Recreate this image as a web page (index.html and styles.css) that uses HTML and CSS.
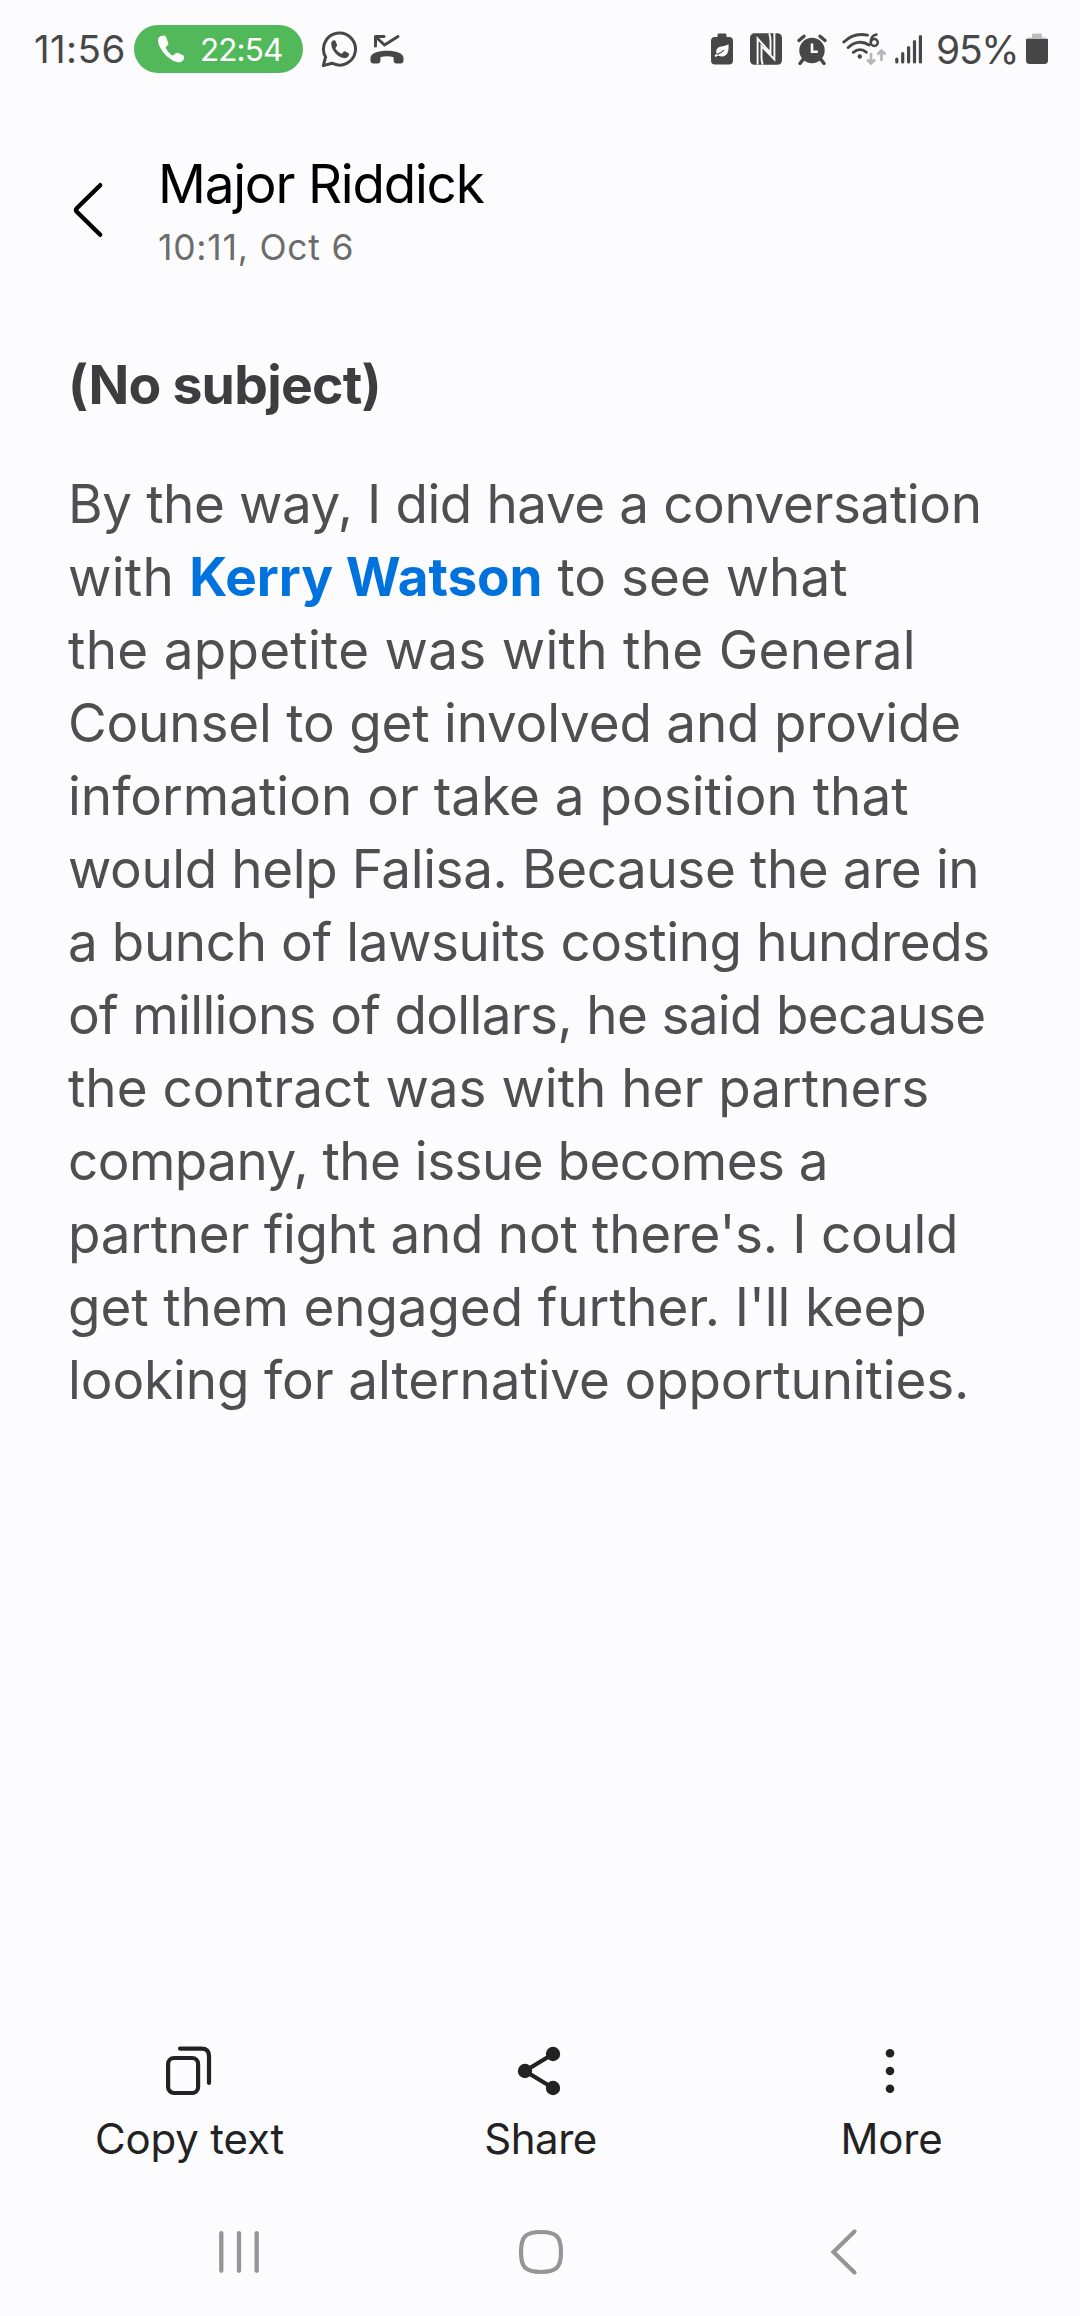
FILE: index.html
```html
<!DOCTYPE html>
<html lang="en">
<head>
<meta charset="utf-8">
<title>Major Riddick</title>
<link rel="stylesheet" href="styles.css">
</head>
<body>
<header class="status">
  <div class="status-left">
    <span class="clock">11:56</span>
    <span class="call">
      <svg width="28" height="28" viewBox="0 0 28 28"><path d="M1 4.500C.5 13 12 26 21 27.200c3 .4 6-2 6.200-4.500.1-1.200-.5-2-1.500-2.600l-4.400-2.200c-1.200-.5-2.200-.2-3 .6l-1.500 1.500c-.8.700-1.700.600-2.500 0C12 17.800 10 15.500 9 13.500c-.4-.9-.2-1.700.5-2.300l1-.9c.8-.7 1.100-1.600.7-2.600L9.200 2.500C8.700 1 7.700.2 6.300.5 3.800 1 1.200 2 1 4.500z" fill="#fff"/></svg>
      <span class="call-time">22:54</span>
    </span>
    <svg class="whatsapp" width="37" height="37" viewBox="0 0 37 37"><path d="M2.300 34.600 4.600 26A16 16 0 1 1 11 32.200z" fill="none" stroke="#474747" stroke-width="3" stroke-linejoin="round"/><path d="M10.200 12.500c0-1.800 1.500-3.200 3-3.200.8 0 1.200.4 1.500 1.200l1.300 3.200c.3.700.1 1.200-.4 1.700l-.8 1c-.4.500-.4.900-.1 1.400 1.200 2 3 3.700 5.300 4.700.6.300 1 .2 1.400-.3l1.200-1.400c.5-.6 1-.6 1.600-.3l3 1.500c.8.400 1 .9.800 1.700-.5 2.300-2.800 3.700-5 3.400-6.500-.9-12.500-7.500-12.800-14.600z" fill="#474747"/></svg>
    <svg class="missed" width="34" height="31" viewBox="0 0 34 31"><path d="M5.500 12V2.500H14M6 3l8.500 8L28 2.500" fill="none" stroke="#474747" stroke-width="3" stroke-linecap="round" stroke-linejoin="round"/><path d="M.5 24c0-5 8-7.300 16.500-7.300S33.500 19 33.500 24v2.500c0 2-1 2.900-3 2.900h-4c-2 0-2.900-1-2.900-3v-3.200c-3.800-1.200-9.400-1.200-13.200 0v3.200c0 2-.9 3-2.900 3h-4c-2 0-3-.9-3-2.900z" fill="#474747"/></svg>
  </div>
  <div class="status-right">
    <svg width="22" height="32" viewBox="0 0 22 32"><path d="M6.500 4V2.200C6.500 1 7 .5 8.200.5h5.600c1.200 0 1.700.5 1.700 1.700V4H18c2.700 0 4 1.300 4 4v19.500c0 2.700-1.300 4-4 4H4c-2.700 0-4-1.300-4-4V8c0-2.700 1.300-4 4-4z" fill="#474747"/><path d="M17.500 11.200c.6 7.800-1.500 12-6.400 12.200-1.500 0-2.700-.4-3.600-1L4.300 24l-.8-1.500 2.300-1.700c-1-2-.7-4.300 1-5.900 2.700-2.500 7-1 10.700-3.700z" fill="#fff"/><path d="M6 21.300c3-.6 5.200-2 7-4.300" fill="none" stroke="#474747" stroke-width="1.200"/></svg>
    <svg class="nfc" width="32" height="32" viewBox="0 0 32 32"><rect width="32" height="31.500" y=".3" rx="4.500" fill="#474747"/><path d="M7.600 31.500V5.500L20.500 20V8c0-3-.3-5-1.300-7.700M24.400 0v26.500L11.500 13v12c0 2.500.3 4.500 1.300 6.500" fill="none" stroke="#fff" stroke-width="1.900"/></svg>
    <svg class="alarm" width="30" height="31" viewBox="0 0 30 31"><circle cx="15" cy="16.500" r="12.700" fill="#474747"/><path d="m2 6.500 5-4.200M28 6.500l-5-4.200M6 25.500l-3 4M24 25.500l3 4" stroke="#474747" stroke-width="3.400" stroke-linecap="round"/><path d="M15 9.500v8.300h5.800" fill="none" stroke="#fff" stroke-width="2.600"/></svg>
    <svg class="wifi" width="45" height="34" viewBox="0 0 45 34"><g fill="none" stroke="#474747" stroke-width="2.900" stroke-linecap="round"><path d="M1.800 10C7.500 4.500 15.500.8 25.500 3.200M6.200 15.500c6-5.800 14-7 21-2.500M11.300 20.300c4.300-3.500 9.300-3.500 13 0"/></g><circle cx="17.800" cy="24.500" r="2.200" fill="#474747"/><circle cx="32.300" cy="10.500" r="3.500" fill="none" stroke="#474747" stroke-width="2.500"/><path d="M34.500 2.500c-3.500.7-5.600 3.800-5.700 7.500" fill="none" stroke="#474747" stroke-width="2.500" stroke-linecap="round"/><path d="M29 21v10m-4-3.500 4 4 4-4M39.500 29V19m-4 3.500 4-4 4 4" fill="none" stroke="#b5b5b5" stroke-width="2.600"/></svg>
    <svg class="signal" width="28" height="30" viewBox="0 0 28 30"><path d="M1.800 25v3M7.700 19.500V28M13.600 13.500V28M19.500 7.500V28M25.400 2.500V28" stroke="#474747" stroke-width="3.200" stroke-linecap="round"/></svg>
    <span class="percent">95%</span>
    <svg width="22" height="32" viewBox="0 0 22 32"><path d="M0 8c0-2.200 1.200-3.400 3.400-3.400H6V2.200C6 1 6.600.4 7.800.4h6.400c1.200 0 1.800.6 1.800 1.800v2.400h2.600C20.800 4.600 22 5.800 22 8z" fill="#bdbdbd"/><path d="M0 6h22v21.500c0 2.200-1.200 3.400-3.400 3.400H3.400C1.200 30.900 0 29.700 0 27.500z" fill="#474747"/></svg>
  </div>
</header>
<section class="topbar">
  <svg class="back" width="32" height="56" viewBox="0 0 32 56"><path d="M28.200 3.200 4.800 26.300q-1.700 1.700 0 3.400l23.400 23.100" fill="none" stroke="#000" stroke-width="4.400" stroke-linecap="round"/></svg>
  <div>
    <h1 class="name">Major Riddick</h1>
    <p class="date">10:11, Oct 6</p>
  </div>
</section>
<main class="message">
  <h2 class="subject">(No subject)</h2>
  <p class="text">
    <span class="line t4">By the way, I did have a conversation</span>
    <span class="line"><span class="w3">with </span><b class="contact">Kerry Watson</b> to see what</span>
    <span class="line w3">the appetite was with the General</span>
    <span class="line t2">Counsel to get involved and provide</span>
    <span class="line">information or take a position that</span>
    <span class="line t4">would help Falisa. Because the are in</span>
    <span class="line t4">a bunch of lawsuits costing hundreds</span>
    <span class="line t6">of millions of dollars, he said because</span>
    <span class="line">the contract was with her partners</span>
    <span class="line t5">company, the issue becomes a</span>
    <span class="line t3">partner fight and not there's. I could</span>
    <span class="line t1">get them engaged further. I'll keep</span>
    <span class="line t1">looking for alternative opportunities.</span>
  </p>
</main>
<nav class="actions">
  <div class="action">
    <svg class="copy" width="46" height="50" viewBox="0 0 46 50"><g fill="none" stroke="#222" stroke-width="4.200" stroke-linecap="round"><rect x="2.100" y="12" width="30" height="35" rx="6"/><path d="M14 2.600h21.500q7.500 0 7.500 7.500V37"/></g></svg>
    <span class="label">Copy text</span>
  </div>
  <div class="action">
    <svg class="nodes" width="44" height="50" viewBox="0 0 44 50"><path d="M36 8 8 25l28 17" fill="none" stroke="#222" stroke-width="4.200"/><g fill="#222"><circle cx="36" cy="8" r="7.200"/><circle cx="8" cy="25" r="7.200"/><circle cx="36" cy="42" r="7.200"/></g></svg>
    <span class="label share">Share</span>
  </div>
  <div class="action">
    <svg class="dots" width="10" height="50" viewBox="0 0 10 50"><g fill="#222"><circle cx="5" cy="7.300" r="4.300"/><circle cx="5" cy="25" r="4.300"/><circle cx="5" cy="42.700" r="4.300"/></g></svg>
    <span class="label">More</span>
  </div>
</nav>
<footer class="system">
  <svg width="42" height="46" viewBox="0 0 42 46"><path d="M3.300 4.200v37.600M21 4.200v37.600M38.700 4.200v37.600" stroke="#959595" stroke-width="4.300" stroke-linecap="round"/></svg>
  <svg class="home" width="46" height="46" viewBox="0 0 46 46"><path d="M23 3c15.500 0 20 4.500 20 20s-4.500 20-20 20S3 38.500 3 23 7.500 3 23 3z" fill="none" stroke="#959595" stroke-width="4.200"/></svg>
  <svg width="28" height="48" viewBox="0 0 28 48"><path d="M24.500 3.500 3.500 24l21 20.500" fill="none" stroke="#959595" stroke-width="4.200" stroke-linecap="round"/></svg>
</footer>
</body>
</html>
```
FILE: styles.css
```css
* { box-sizing: border-box; margin: 0; padding: 0; }
body {
  display: flex;
  flex-direction: column;
  width: 1080px;
  height: 2316px;
  overflow: hidden;
  background: #fcfcfe;
  color: #4f4f4f;
  font-family: Inter, "Liberation Sans", sans-serif;
}
svg { display: block; flex: none; }

.status {
  display: flex;
  justify-content: space-between;
  height: 98px;
  padding: 0 32px 0 34px;
  color: #474747;
}
.status-left, .status-right { display: flex; align-items: center; white-space: nowrap; }
.clock { width: 100px; font-size: 38.5px; letter-spacing: 0.4px; }
.call {
  display: flex;
  align-items: center;
  gap: 15px;
  width: 169px;
  height: 48px;
  padding-left: 23px;
  border-radius: 24px;
  background: #52b95b;
  color: #fff;
}
.call-time { font-size: 31.5px; letter-spacing: -0.9px; }
.whatsapp { margin-left: 18px; }
.missed { margin-left: 12px; }
.nfc { margin-left: 17px; }
.alarm { margin-left: 15px; }
.wifi { margin-left: 15px; }
.signal { margin-left: 8px; }
.percent { width: 90px; margin-left: 13px; font-size: 39px; letter-spacing: -1.3px; }

.topbar { display: flex; padding: 56px 0 0 72px; height: 257px; }
.back { margin: 28px 54px 0 0; }
.name { font-size: 53px; line-height: 60px; font-weight: 400; letter-spacing: -1.2px; color: #000; }
.date { margin-top: 12px; font-size: 35.5px; line-height: 44px; letter-spacing: 0.75px; color: #6c6c6c; }

.message { flex: 1; padding: 0 68px; }
.subject { font-size: 53.5px; line-height: 60px; font-weight: 700; letter-spacing: -0.75px; color: #3d3d3d; }
.text { margin-top: 53px; font-size: 53px; line-height: 73px; }
.line { display: block; white-space: nowrap; }
.contact { font-weight: 700; color: #0072de; }
.w3 { letter-spacing: 0.29px; }
.t1 { letter-spacing: -0.12px; }
.t2 { letter-spacing: -0.19px; }
.t3 { letter-spacing: -0.28px; }
.t4 { letter-spacing: -0.4px; }
.t5 { letter-spacing: -0.54px; }
.t6 { letter-spacing: -0.66px; }

.actions { display: grid; grid-template-columns: repeat(3, 351px); padding-left: 14px; height: 184px; color: #222; }
.action { display: flex; flex-direction: column; align-items: center; }
.label { margin-top: 18px; font-size: 42px; line-height: 50px; letter-spacing: -0.15px; }
.share { letter-spacing: -0.5px; }
.copy { margin-right: 2px; }
.nodes { margin-right: 3px; }
.dots { margin-right: 3px; }

.system { display: flex; justify-content: space-between; align-items: center; height: 86px; padding: 0 222px 42px 218px; }
.home { margin-right: 8px; }
```
